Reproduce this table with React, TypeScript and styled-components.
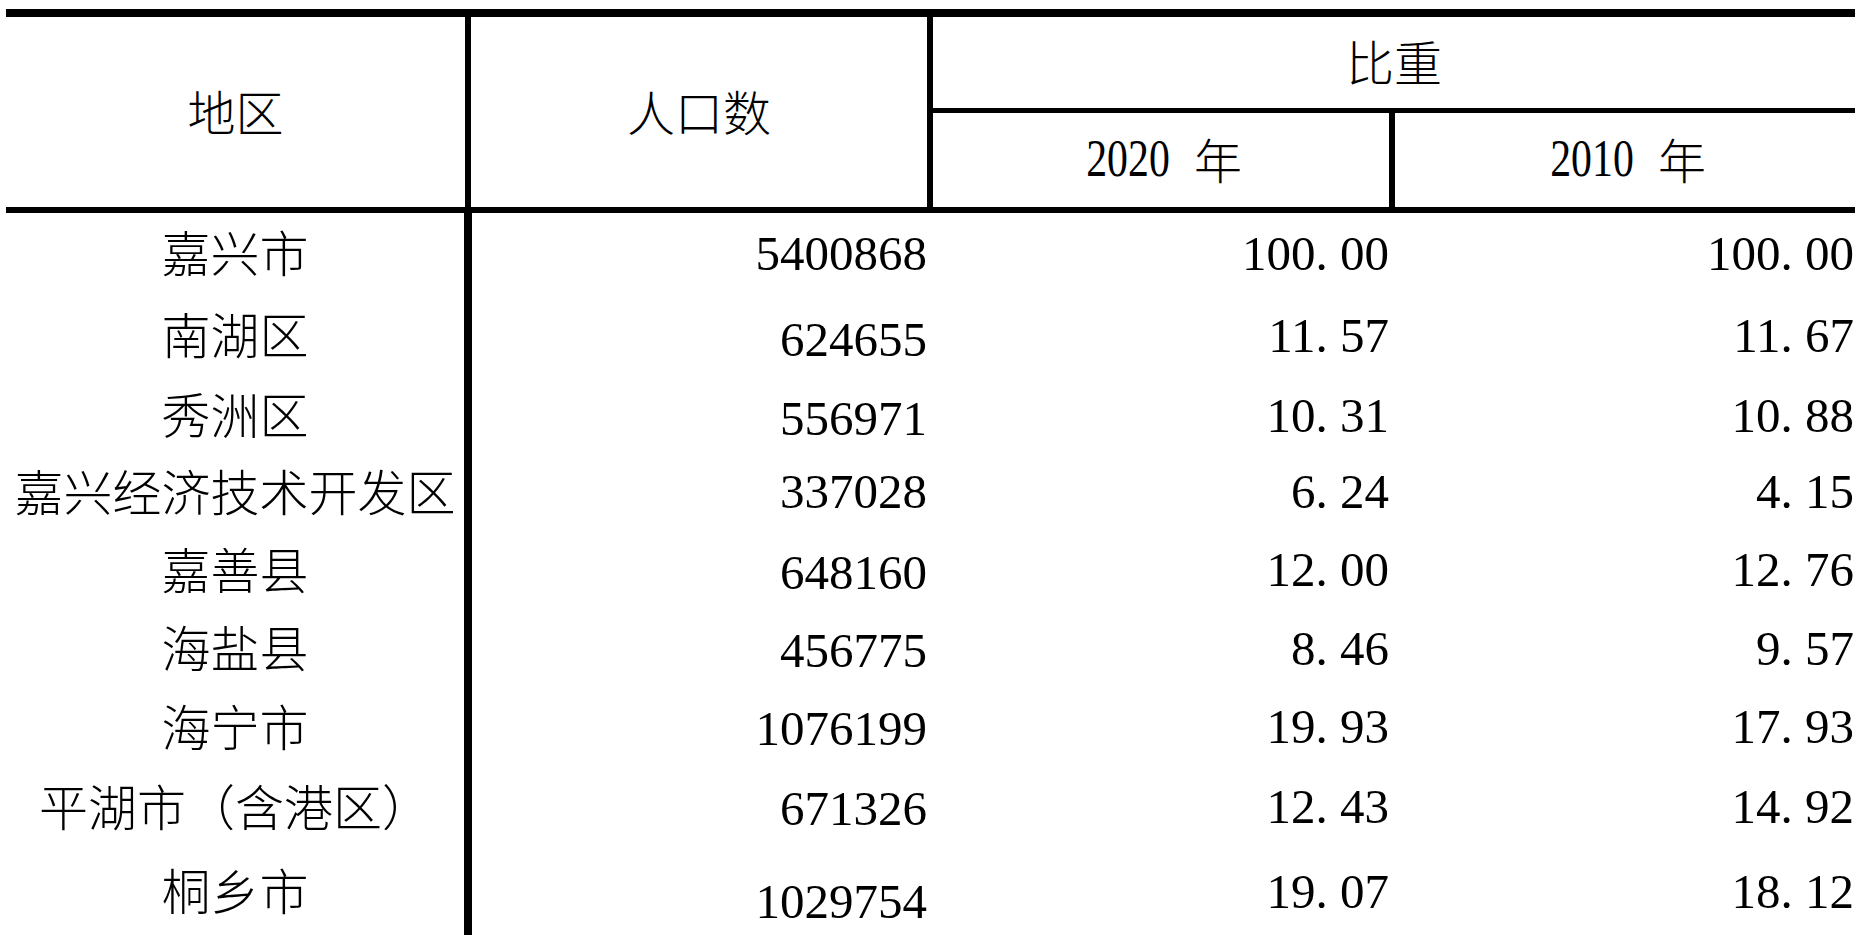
import styled, { createGlobalStyle } from 'styled-components';

const GlobalStyle = createGlobalStyle`
  html, body {
    margin: 0;
    padding: 0;
    background: #ffffff;
    overflow: hidden;
  }
  body {
    color: #000000;
    font-family: "Liberation Serif", "Noto Sans CJK SC", serif;
  }
`;

const Page = styled.div`
  width: 1865px;
  height: 935px;
  box-sizing: border-box;
  padding: 9px 0 0 6px;
`;

const Table = styled.div`
  width: 1849px;
`;

const Head = styled.div`
  display: grid;
  grid-template-columns: 465px 462px 462px 460px;
  grid-template-rows: 96px 94px;
  border-top: 8px solid #000;
  border-bottom: 6px solid #000;
`;

const HeadCell = styled.div<{ $ruleRight?: number; $ruleBottom?: number }>`
  box-sizing: border-box;
  display: flex;
  align-items: center;
  justify-content: center;
  padding-bottom: 5px;
  font-family: "Noto Sans CJK SC", sans-serif;
  font-size: 48px;
  font-weight: 300;
  line-height: 1;
  border-right: ${(p) => (p.$ruleRight ? `${p.$ruleRight}px solid #000` : 'none')};
  border-bottom: ${(p) => (p.$ruleBottom ? `${p.$ruleBottom}px solid #000` : 'none')};
`;

const SpanRows = styled(HeadCell)`
  grid-row: 1 / 3;
`;

const SpanCols = styled(HeadCell)`
  grid-column: 3 / 5;
`;

const Year = styled.span`
  display: inline-block;
  margin-right: 18px;
  font-family: "Liberation Serif", serif;
  transform: scale(0.87, 1.1);
`;

const Row = styled.div<{ $h: number }>`
  display: grid;
  grid-template-columns: 466px 461px 462px 460px;
  height: ${(p) => p.$h}px;
`;

const Label = styled.div`
  box-sizing: border-box;
  display: flex;
  align-items: center;
  justify-content: center;
  padding-bottom: 5px;
  border-right: 8px solid #000;
  font-family: "Noto Sans CJK SC", sans-serif;
  font-size: 49px;
  font-weight: 300;
  line-height: 1;
  white-space: nowrap;
`;

const Num = styled.div<{ $pad: number; $drop?: number }>`
  box-sizing: border-box;
  display: flex;
  align-items: center;
  justify-content: flex-end;
  padding-right: ${(p) => p.$pad}px;
  padding-top: ${(p) => (p.$drop ?? 0) * 2}px;
  font-family: "Liberation Serif", serif;
  font-size: 49px;
  line-height: 1;
  white-space: nowrap;
`;

const Dot = styled.span`
  display: inline-block;
  width: 0.5em;
  text-align: left;
`;

type Line = {
  name: string;
  pop: string;
  y2020: string;
  y2010: string;
  h: number;
  drop: number;
};

const rows: Line[] = [
  { name: '嘉兴市', pop: '5400868', y2020: '100.00', y2010: '100.00', h: 80, drop: 0 },
  { name: '南湖区', pop: '624655', y2020: '11.57', y2010: '11.67', h: 84, drop: 4 },
  { name: '秀洲区', pop: '556971', y2020: '10.31', y2010: '10.88', h: 76, drop: 3 },
  { name: '嘉兴经济技术开发区', pop: '337028', y2020: '6.24', y2010: '4.15', h: 77, drop: 0 },
  { name: '嘉善县', pop: '648160', y2020: '12.00', y2010: '12.76', h: 79, drop: 3 },
  { name: '海盐县', pop: '456775', y2020: '8.46', y2010: '9.57', h: 78, drop: 2 },
  { name: '海宁市', pop: '1076199', y2020: '19.93', y2010: '17.93', h: 79, drop: 2 },
  { name: '平湖市（含港区）', pop: '671326', y2020: '12.43', y2010: '14.92', h: 81, drop: 2 },
  { name: '桐乡市', pop: '1029754', y2020: '19.07', y2010: '18.12', h: 88, drop: 10 },
];

// half-width period, as the source document's font sets it
const Decimal = ({ value }: { value: string }) => {
  const [whole, frac] = value.split('.');
  return (
    <>
      {whole}
      <Dot>.</Dot>
      {frac}
    </>
  );
};

export default function App() {
  return (
    <Page lang="zh-CN">
      <GlobalStyle />
      <Table>
        <Head>
          <SpanRows $ruleRight={6}>地区</SpanRows>
          <SpanRows $ruleRight={6}>人口数</SpanRows>
          <SpanCols $ruleBottom={5}>比重</SpanCols>
          <HeadCell $ruleRight={6}>
            <Year>2020</Year>年
          </HeadCell>
          <HeadCell>
            <Year>2010</Year>年
          </HeadCell>
        </Head>
        {rows.map((r) => (
          <Row key={r.name} $h={r.h}>
            <Label>{r.name}</Label>
            <Num $pad={6} $drop={r.drop}>{r.pop}</Num>
            <Num $pad={6}>
              <Decimal value={r.y2020} />
            </Num>
            <Num $pad={1}>
              <Decimal value={r.y2010} />
            </Num>
          </Row>
        ))}
      </Table>
    </Page>
  );
}
